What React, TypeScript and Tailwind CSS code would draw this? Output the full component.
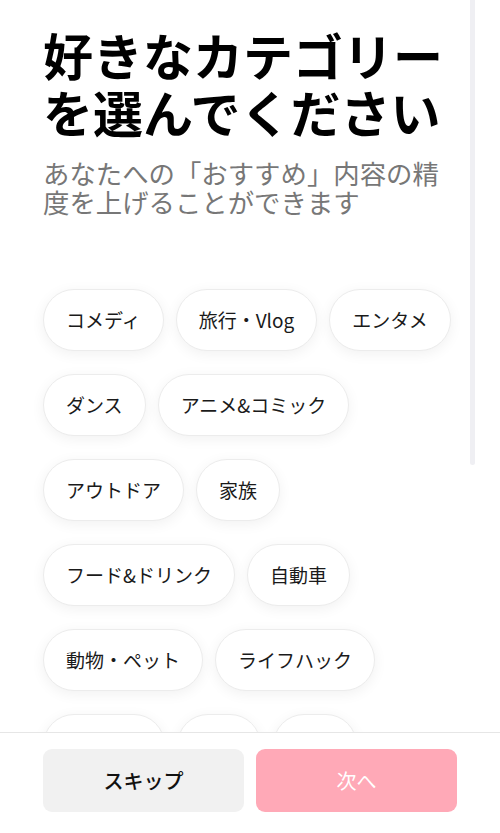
import React from 'react';

const categories = [
    'コメディ',
    '旅行・Vlog',
    'エンタメ',
    'ダンス',
    'アニメ&コミック',
    'アウトドア',
    '家族',
    'フード&ドリンク',
    '自動車',
    '動物・ペット',
    'ライフハック',
    'スポーツ',
    '音楽',
    '美容',
    'ゲーム',
    'ファッション',
];

const font = { fontFamily: '"Noto Sans CJK JP", "Noto Sans", sans-serif' };

export default function App() {
    return (
        <div className="relative flex h-[833px] w-[500px] flex-col overflow-hidden bg-white" style={font}>
            {/* scroll indicator */}
            <div className="absolute right-[25px] top-0 h-[465px] w-[5px] rounded-b-full bg-[#efeff3]" />

            <div className="flex-1 overflow-hidden px-[43px] pt-[26px]">
                <h1 className="text-[50px] font-bold leading-[57px] text-black">
                    好きなカテゴリー
                    <br />
                    を選んでください
                </h1>
                <p className="mt-[18px] text-[26.4px] leading-[29px] text-[#777]">
                    あなたへの「おすすめ」内容の精度を上げることができます
                </p>

                <div className="mt-[73px] flex flex-wrap gap-x-[12px] gap-y-[23px]">
                    {categories.map(c => (
                        <button
                            key={c}
                            type="button"
                            className="h-[62px] rounded-full border border-[#ececec] bg-white px-[22px] text-[19px] font-normal text-[#1a1a1a] shadow-[0_3px_14px_rgba(0,0,0,0.06)]"
                        >
                            {c}
                        </button>
                    ))}
                </div>
            </div>

            {/* Footer */}
            <div className="relative z-10 flex gap-[12px] border-t border-[#e6e6e6] bg-white px-[43px] pb-[21px] pt-[16px]">
                <button
                    type="button"
                    className="h-[63px] flex-1 rounded-[9px] bg-[#f1f1f1] text-[20px] font-medium text-[#111]"
                >
                    スキップ
                </button>
                <button
                    type="button"
                    className="h-[63px] flex-1 rounded-[9px] bg-[#ffa9b7] text-[20px] font-normal text-white"
                >
                    次へ
                </button>
            </div>
        </div>
    );
}
